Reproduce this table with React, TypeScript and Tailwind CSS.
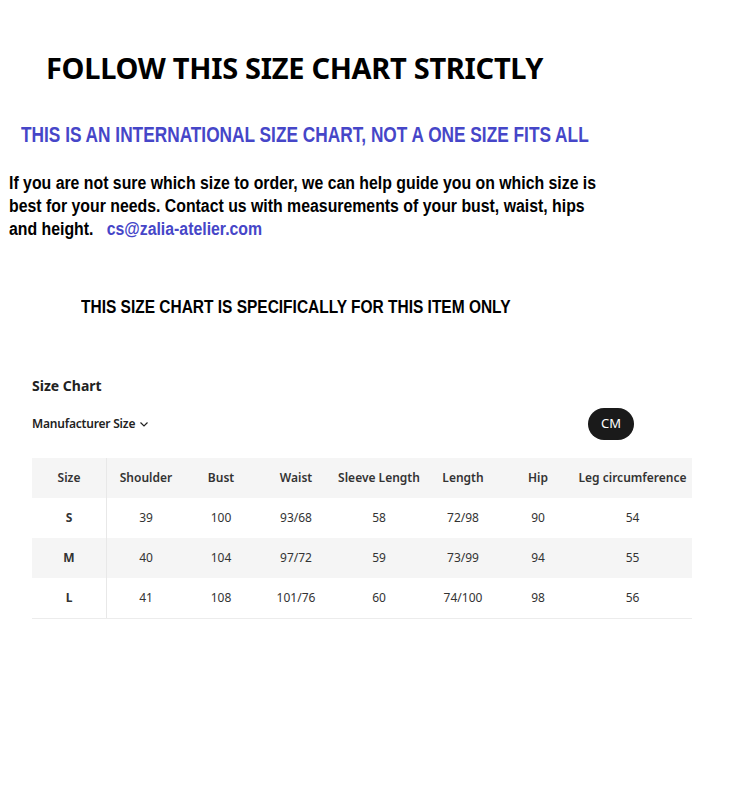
const narrow = '"Liberation Sans", Arial, sans-serif';

export default function App() {
  const columns = [
    { key: 'size', label: 'Size', w: 'w-[75px]' },
    { key: 'shoulder', label: 'Shoulder', w: 'w-[78px]' },
    { key: 'bust', label: 'Bust', w: 'w-[72px]' },
    { key: 'waist', label: 'Waist', w: 'w-[78px]' },
    { key: 'sleeve', label: 'Sleeve Length', w: 'w-[88px]' },
    { key: 'length', label: 'Length', w: 'w-[80px]' },
    { key: 'hip', label: 'Hip', w: 'w-[70px]' },
    { key: 'leg', label: 'Leg circumference', w: 'w-[119px]' },
  ];

  const rows = [
    ['S', '39', '100', '93/68', '58', '72/98', '90', '54'],
    ['M', '40', '104', '97/72', '59', '73/99', '94', '55'],
    ['L', '41', '108', '101/76', '60', '74/100', '98', '56'],
  ];

  return (
    <div className="min-h-screen overflow-hidden bg-white text-black">
      {/* Notice */}
      <h1
        className="pl-[46px] pt-[50px] text-[29px] font-bold leading-[36px] tracking-[-0.3px]"
        style={{ fontFamily: '"Noto Sans", "Open Sans", sans-serif' }}
      >
        FOLLOW THIS SIZE CHART STRICTLY
      </h1>
      <div className="pl-[21px] mt-[36px]">
        <p
          className="inline-block origin-left scale-x-[0.785] whitespace-nowrap text-[22px] font-bold leading-[26px] text-[#4646c8]"
          style={{ fontFamily: narrow }}
        >
          THIS IS AN INTERNATIONAL SIZE CHART, NOT A ONE SIZE FITS ALL
        </p>
      </div>
      <div className="pl-[9px] mt-[24px]">
        <p
          className="inline-block origin-left scale-x-[0.88] whitespace-nowrap text-[18px] font-bold leading-[23px]"
          style={{ fontFamily: narrow }}
        >
          If you are not sure which size to order, we can help guide you on which size is
          <br />
          best for your needs. Contact us with measurements of your bust, waist, hips
          <br />
          and height.
          <span className="ml-[15px] text-[#4646c8]">cs@zalia-atelier.com</span>
        </p>
      </div>
      <div className="pl-[81px] mt-[54px]">
        <p
          className="inline-block origin-left scale-x-[0.86] whitespace-nowrap text-[18px] font-bold leading-[23px]"
          style={{ fontFamily: narrow }}
        >
          THIS SIZE CHART IS SPECIFICALLY FOR THIS ITEM ONLY
        </p>
      </div>

      {/* Size chart */}
      <div className="px-[32px] mt-[57px] w-[724px] text-[#222]" style={{ fontFamily: '"Noto Sans", "Open Sans", sans-serif' }}>
        <div className="text-[14px] font-bold leading-[20px]">Size Chart</div>
        <div className="mt-[12px] flex items-center justify-between pr-[58px]">
          <div className="flex items-center gap-1 text-[12px] font-semibold tracking-[-0.2px]">
            Manufacturer Size
            <svg width="10" height="10" viewBox="0 0 10 10" fill="none" stroke="#222" strokeWidth="1.2">
              <path d="M1.5 3.5 L5 7 L8.5 3.5" />
            </svg>
          </div>
          <button className="h-[32px] w-[46px] rounded-full bg-[#1a1a1a] text-[13px] text-white">CM</button>
        </div>

        <div className="mt-[18px] border-b border-[#ececec] text-[12px]">
          <div className="flex h-[40px] bg-[#f5f5f5] font-semibold text-[#333]">
            {columns.map((c, i) => (
              <div key={c.key} className={`${c.w} flex items-center justify-center ${i === 0 ? 'border-r border-[#e8e8e8]' : ''}`}>
                {c.label}
              </div>
            ))}
          </div>
          {rows.map((r, idx) => (
            <div key={idx} className={`flex h-[40px] text-[#333] ${idx === 1 ? 'bg-[#f5f5f5]' : 'bg-white'}`}>
              {r.map((v, i) => (
                <div
                  key={i}
                  className={`${columns[i].w} flex items-center justify-center ${i === 0 ? 'border-r border-[#e8e8e8] font-bold' : ''}`}
                >
                  {v}
                </div>
              ))}
            </div>
          ))}
        </div>
      </div>
    </div>
  );
}
